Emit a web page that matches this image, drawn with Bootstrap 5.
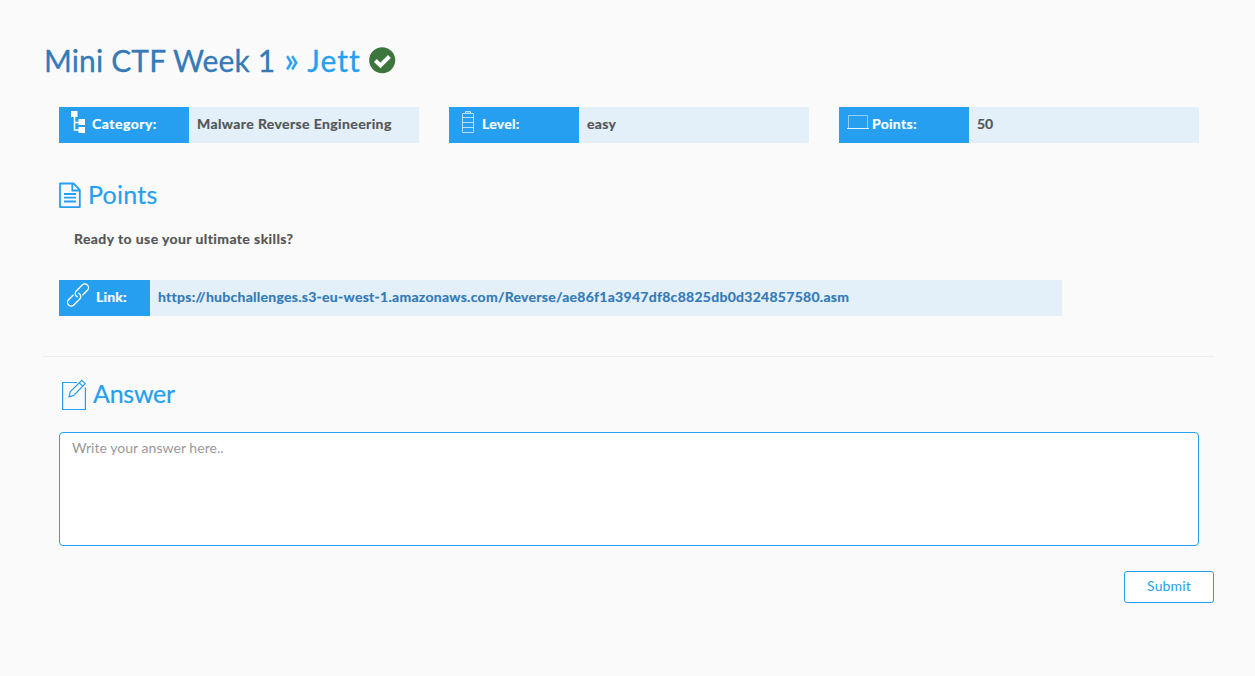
<!DOCTYPE html>
<html lang="en">
<head>
<meta charset="utf-8">
<meta name="viewport" content="width=device-width, initial-scale=1">
<title>Mini CTF Week 1 » Jett</title>
<link href="https://cdn.jsdelivr.net/npm/bootstrap@5.3.0/dist/css/bootstrap.min.css" rel="stylesheet">
<style>
body{background:#fafafa;font-family:Lato,"Liberation Sans",sans-serif;font-size:14px;line-height:20px;color:#555;font-variant-ligatures:none}
.page{width:1170px;margin-left:44px;padding-top:40px}
.accent{color:#269ff0}
.navy{color:#337ab7}
h1{font-size:30px;line-height:40px;font-weight:400;height:40px;-webkit-text-stroke:.3px}
h2{font-size:25px;line-height:28px;height:30px;font-weight:400;color:#269ff0;-webkit-text-stroke:.2px}
.fields{--bs-gutter-x:30px;margin:27px 0 0}
.field{height:36px;background:#e3eff9;font-weight:700;-webkit-text-stroke:.2px}
.field-name{width:130px;background:#269ff0;color:#fff;padding-left:8px}
.field-value{padding-left:8px}
.field span{line-height:34px;white-space:nowrap}
.field-value span{display:block}
.inner{padding:0 15px}
.link-field{width:1003px;margin-top:31px}
.link-field .field-name{width:91px}
hr{margin:40px 0 0 -1px;border-top:1px solid #eee;opacity:1}
textarea.form-control{height:114px;border:1px solid #269ff0;border-radius:4px;padding:5px 12px;font-size:14px;line-height:20px;resize:none;letter-spacing:.04px}
textarea.form-control::placeholder{color:#999}
.btn-send{width:90px;height:32px;padding:0 0 2px;border:1px solid #269ff0;border-radius:3px;background:#fff;color:#269ff0;font-size:14px;line-height:28px;letter-spacing:.15px}
svg{flex:none;display:block}
.t-week{letter-spacing:.14px}
.t-mark{margin-left:9px;width:23px;font-size:34px;line-height:38px}
.t-jett{letter-spacing:1.05px}
.t-cat{letter-spacing:.5px}
.t-mal{letter-spacing:.39px}
.t-lev,.t-easy,.t-poi{letter-spacing:.3px}
.t-link{letter-spacing:.2px}
.t-ready{letter-spacing:.41px;-webkit-text-stroke:.2px}
.t-url{letter-spacing:.275px}
.t-h2{letter-spacing:.25px}
.t-ans{letter-spacing:-.25px}
</style>
</head>
<body>
<main class="page">
  <h1 class="d-flex m-0 accent"><span class="navy t-week">Mini CTF Week 1</span><span class="t-mark">»</span><span class="t-jett">Jett</span>
    <svg style="margin:7px 0 0 8px" width="27" height="27" viewBox="0 0 27 27"><circle cx="13.2" cy="13.2" r="13" fill="#3c763d"/><path d="M6.4 13.5l5 5 9-9" fill="none" stroke="#fff" stroke-width="4"/></svg>
  </h1>
  <section class="row fields">
    <div class="col-4"><div class="field d-flex"><div class="field-name d-flex">
      <svg width="25" height="36" viewBox="0 0 25 36" fill="#fff"><path d="M4 4h6.5v6H4zM11.5 12H18v6h-6.500zM11.500 20H18v6h-6.500z"/><path d="M7.500 10v13H12M7.500 15.500H12" fill="none" stroke="#fff" stroke-width="1.500"/></svg>
      <span class="t-cat">Category:</span></div><div class="field-value"><span class="t-mal">Malware Reverse Engineering</span></div></div></div>
    <div class="col-4"><div class="field d-flex"><div class="field-name d-flex">
      <svg width="25" height="36" viewBox="0 0 25 36" fill="none" stroke="#fff" stroke-opacity=".65"><path d="M5.5 6.5h11v19h-11zM5.5 10.5h11M5.5 15.5h11M5.5 20.5h11"/><path d="M8.5 6V4.800h5V6" stroke-opacity="1"/></svg>
      <span class="t-lev">Level:</span></div><div class="field-value"><span class="t-easy">easy</span></div></div></div>
    <div class="col-4"><div class="field d-flex"><div class="field-name d-flex">
      <svg width="25" height="36" viewBox="0 0 25 36" fill="none" stroke="#fff"><path d="M1.5 21V8.5h19V21" stroke-opacity=".5"/><path d="M0 21.5h22" stroke-opacity=".85"/></svg>
      <span class="t-poi">Points:</span></div><div class="field-value"><span class="t-50">50</span></div></div></div>
  </section>
  <section class="inner">
    <h2 class="d-flex mb-0" style="margin-top:37px"><svg style="margin:2px 7px 0 0" width="22" height="27" viewBox="0 0 22 27" fill="none" stroke="#269ff0" stroke-width="1.8" stroke-linejoin="round"><path d="M1 1.500h13.500l6.300 6.300v17.300H1zM13.300 1.500v7h7.500"/><path d="M5 12h12M5 15.700h12M5 19.500h12"/></svg><span class="t-h2">Points</span></h2>
    <p class="fw-bold mb-0" style="margin:19px 0 0 15px"><span class="t-ready">Ready to use your ultimate skills?</span></p>
    <div class="field link-field d-flex"><div class="field-name d-flex">
      <svg width="29" height="36" viewBox="0 0 29 36" fill="none" stroke="#fff" stroke-width="1.3"><g transform="rotate(-45 11 15)"><path d="M8 11.7H1a3.7 3.7 0 0 0 0 7.400h8.400a3.700 3.700 0 0 0 3.200-5.200"/><path d="M14 18.300h7a3.700 3.700 0 0 0 0-7.400h-8.400a3.700 3.700 0 0 0-3.200 5.200"/></g></svg>
      <span class="t-link">Link:</span></div><div class="field-value"><a class="navy text-decoration-none" href="#"><span class="t-url">https://hubchallenges.s3-eu-west-1.amazonaws.com/Reverse/ae86f1a3947df8c8825db0d324857580.asm</span></a></div></div>
  </section>
  <hr>
  <section class="inner">
    <h2 class="d-flex mb-0" style="margin-top:22px"><svg style="margin:0 4px 0 2px" width="28" height="32" viewBox="0 0 28 32" fill="none" stroke="#269ff0" stroke-width="1.2"><path d="M16 3.500H1.600v27h22.800V8.500"/><path d="M8 17.800l1.200-5L20.800 1.300l3.400 3.400L12.700 16.400zM18.300 3.800l3.400 3.400"/></svg><span class="t-ans">Answer</span></h2>
    <textarea class="form-control" style="margin-top:23px" placeholder="Write your answer here.." aria-label="Answer"></textarea>
  </section>
  <div class="d-flex justify-content-end" style="margin-top:25px"><button class="btn btn-send"><span class="t-sub">Submit</span></button></div>
</main>
<script src="https://cdn.jsdelivr.net/npm/bootstrap@5.3.0/dist/js/bootstrap.bundle.min.js"></script>
</body>
</html>
